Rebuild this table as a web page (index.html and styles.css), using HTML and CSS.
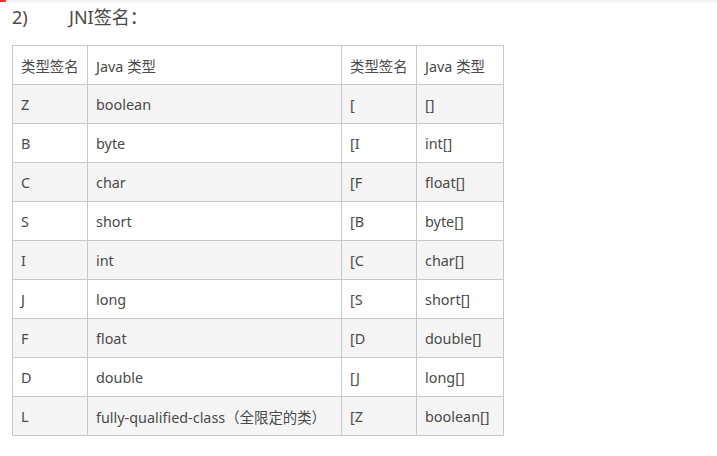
FILE: index.html
```html
<!DOCTYPE html>
<html lang="zh">
<head>
<meta charset="utf-8">
<link rel="stylesheet" href="styles.css">
</head>
<body>
<div class="topbar"><span class="mark"></span></div>
<h2 class="title"><span class="num">2)</span><span>JNI签名：</span></h2>
<table class="sig">
  <tr><td>类型签名</td><td>Java 类型</td><td>类型签名</td><td>Java 类型</td></tr>
  <tr class="alt"><td>Z</td><td>boolean</td><td>[</td><td>[]</td></tr>
  <tr><td>B</td><td>byte</td><td>[I</td><td>int[]</td></tr>
  <tr class="alt"><td>C</td><td>char</td><td>[F</td><td>float[]</td></tr>
  <tr><td>S</td><td>short</td><td>[B</td><td>byte[]</td></tr>
  <tr class="alt"><td>I</td><td>int</td><td>[C</td><td>char[]</td></tr>
  <tr><td>J</td><td>long</td><td>[S</td><td>short[]</td></tr>
  <tr class="alt"><td>F</td><td>float</td><td>[D</td><td>double[]</td></tr>
  <tr><td>D</td><td>double</td><td>[J</td><td>long[]</td></tr>
  <tr class="alt"><td>L</td><td>fully-qualified-class（全限定的类）</td><td>[Z</td><td>boolean[]</td></tr>
</table>
</body>
</html>
```
FILE: styles.css
```css
html, body {
  margin: 0;
  padding: 0;
  background: #fff;
}
body {
  font-family: "Noto Sans", "Noto Sans CJK SC", sans-serif;
  color: #4a4a4a;
}
.topbar {
  height: 3px;
  background: linear-gradient(#f0f0f0, #fafafa);
  display: flex;
}
.mark {
  width: 6px;
  height: 2px;
  background: #e53935;
}
.title {
  margin: 1px 0 0 12px;
  font-size: 18px;
  font-weight: normal;
  line-height: 26px;
  height: 41px;
  color: #4a4a4a;
}
.title .num {
  display: inline-block;
  width: 57px;
}
.sig {
  margin-left: 12px;
  border-collapse: collapse;
  font-size: 14.4px;
}
.sig td {
  border: 1px solid #c8c8c8;
  height: 39px;
  padding: 0 8px;
  box-sizing: border-box;
  white-space: nowrap;
}
.sig td:nth-child(1) { width: 75px; }
.sig td:nth-child(2) { width: 254px; }
.sig td:nth-child(3) { width: 75px; }
.sig td:nth-child(4) { width: 87px; }
.sig tr.alt td {
  background: #f5f5f5;
}
```
